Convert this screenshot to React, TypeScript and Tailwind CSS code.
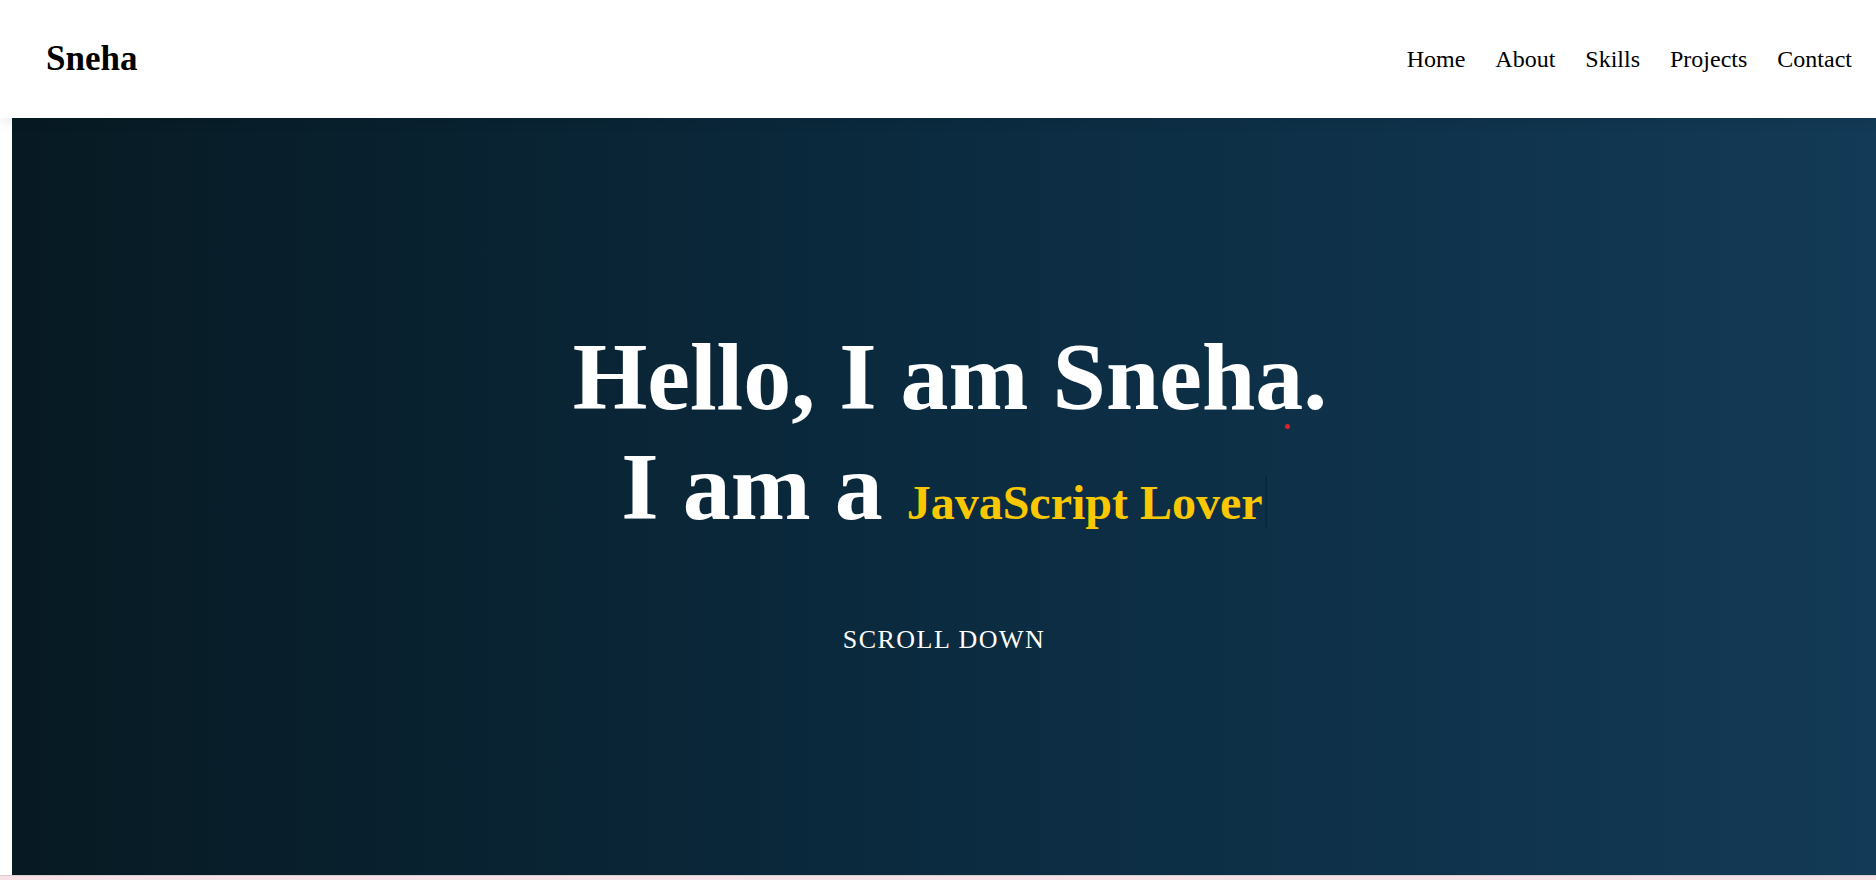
import React from 'react'

const links = ['Home', 'About', 'Skills', 'Projects', 'Contact']

export default function App() {
  return (
    <div className="min-h-screen bg-white font-['Liberation_Serif',serif] overflow-hidden">
      <header className="relative z-10 flex items-center justify-between h-[118px] pl-[46px] pr-6 bg-white shadow-[0_4px_12px_rgba(0,0,0,0.08)]">
        <a href="#" className="text-[35px] font-bold text-black">
          Sneha
        </a>
        <nav>
          <ul className="flex gap-[30px] text-[24px] text-black">
            {links.map((l) => (
              <li key={l}>
                <a href="#">{l}</a>
              </li>
            ))}
          </ul>
        </nav>
      </header>

      <section className="relative ml-3 h-[757px] bg-gradient-to-r from-[#071a23] via-[#0b2b40] to-[#133a56] flex flex-col items-center pt-[204px] text-white">
        <h1 className="text-[96px] font-bold leading-[1.15] text-center">
          <span className="pl-3">Hello, I am Sneha.</span>
          <br />
          I am a{' '}
          <span className="text-[48px] text-[#fac800] border-r-2 border-[#0a283c] pr-[2px]">
            JavaScript Lover
          </span>
        </h1>
        <p className="mt-[77px] text-[26px] tracking-[1.5px]">SCROLL DOWN</p>

        <span className="absolute left-[1273px] top-[306px] w-[5px] h-[5px] rounded-full bg-[#e0202a]" />
      </section>

      <section className="h-40 bg-[#f6e2e6] border-t border-[#d8cfd0]" />
    </div>
  )
}
